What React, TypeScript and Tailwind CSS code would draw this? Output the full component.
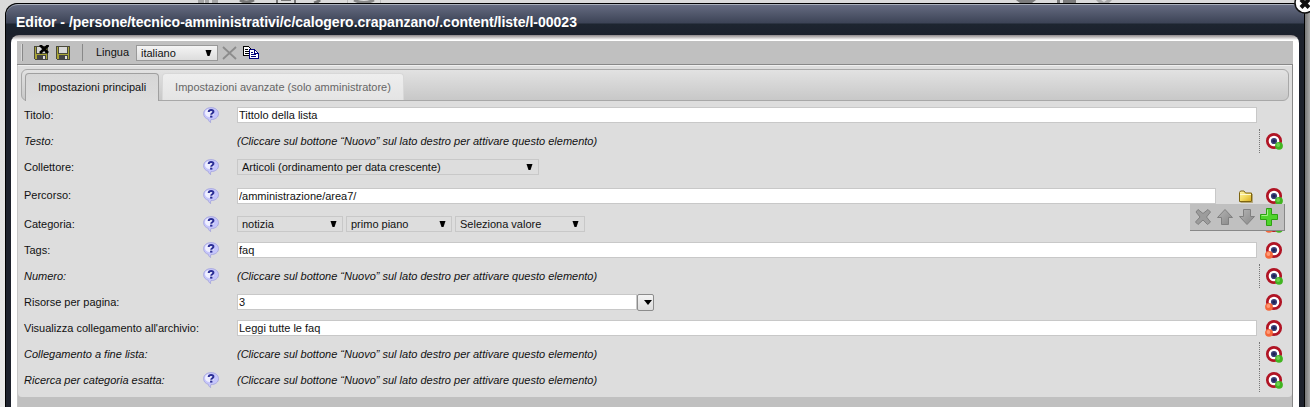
import React, { useState } from 'react';

type Marker = 'green' | 'red' | 'both';

function HelpIcon() {
  return (
    <svg width="16" height="16" viewBox="0 0 16 16">
      <path d="M8 .6C3.800.6.6 3.200.6 6.700c0 2.800 1.900 4.900 4.700 5.600.1 1.300.8 2.300 2.300 3.300-.3-1.200-.1-2.200.3-3C12.400 12.600 15.500 10.100 15.500 6.700 15.500 3.200 12.300.6 8 .6z" fill="#c6c6fb" stroke="#a3a3dc" strokeWidth="0.800" />
      <ellipse cx="6.500" cy="6" rx="4.500" ry="4" fill="#efefff" />
      <path d="M5.700 5c0-1.400 1.100-2 2.400-2s2.300.7 2.300 1.800c0 1.500-2.200 1.400-2.200 3" fill="none" stroke="#2b2f96" strokeWidth="2" />
      <rect x="7.100" y="8.600" width="2.300" height="2" fill="#2b2f96" />
    </svg>
  );
}

function TargetIcon({ marker }: { marker: Marker }) {
  return (
    <svg width="18" height="18" viewBox="0 0 18 18">
      <circle cx="9" cy="9" r="6.700" fill="#fff" stroke="#b01424" strokeWidth="2.700" />
      <circle cx="9" cy="9" r="3.100" fill="#3a4078" />
      <circle cx="9" cy="9" r="1.600" fill="#1c2054" />
      {marker !== 'red' && (
        <>
          <circle cx="14" cy="13.800" r="3.900" fill="#41b521" />
          <circle cx="13.200" cy="13" r="1.900" fill="#6fd04e" />
        </>
      )}
      {marker !== 'green' && (
        <>
          <circle cx="4" cy="13.800" r="3.900" fill="#f4673a" />
          <circle cx="3.400" cy="13" r="1.900" fill="#ff9a76" />
        </>
      )}
    </svg>
  );
}

function FolderIcon() {
  return (
    <svg width="16" height="16" viewBox="0 0 16 16">
      <defs>
        <linearGradient id="folder" x1="0" y1="0" x2="1" y2="1">
          <stop offset="0" stopColor="#fff6b0" />
          <stop offset="0.5" stopColor="#f3dc62" />
          <stop offset="1" stopColor="#d9ac1c" />
        </linearGradient>
      </defs>
      <path d="M1.500 13.500v-9l1-1.500h3.500l1.500 2h6v8.500z" fill="url(#folder)" stroke="#7d6410" />
      <path d="M2 6.500h11" stroke="#fffad0" />
      <path d="M14.500 6v8.500H2.500" stroke="#8e7416" strokeOpacity="0.500" fill="none" />
    </svg>
  );
}

function FloppyIcon({ exit = false }: { exit?: boolean }) {
  return (
    <svg width="16" height="16" viewBox="0 0 16 16" shapeRendering="crispEdges">
      <path d="M1 1h14v14H2l-1-1z" fill="#4a4a3c" />
      <path d="M2 2h12v12H2z" fill="#a8a436" />
      <path d="M3 1h10v8H3z" fill="#4a4a3c" />
      <path d="M4 2h8v6H4z" fill="#d8d8d8" />
      <path d="M4 10h9v5H4z" fill="#444" />
      <path d="M10 11h2v3h-2z" fill="#dedede" />
      {exit && <path d="M7 0l8 8M15.500 0L7 8" stroke="#000" strokeWidth="2.800" shapeRendering="auto" />}
    </svg>
  );
}

function CopyIcon() {
  return (
    <svg width="16" height="16" viewBox="0 0 16 16" shapeRendering="crispEdges">
      <path d="M.5 1.500h5l3 3v6h-8z" fill="#fff" stroke="#000" />
      <path d="M2 4.500h3M2 6.500h5M2 8.500h5" stroke="#000" />
      <path d="M6.500 4.500h5l3.500 3.500v5.500H6.500z" fill="#fff" stroke="#00007a" />
      <path d="M11.500 4.500v3.500h3.500" fill="none" stroke="#00007a" />
      <path d="M8 7.500h2M8 9.500h5M8 11.500h5" stroke="#00007a" />
    </svg>
  );
}

function ArrowIcon({ down = false }: { down?: boolean }) {
  return (
    <svg width="18" height="18" viewBox="0 0 18 18">
      <defs>
        <linearGradient id="arrow" x1="0" y1="0" x2="1" y2="1">
          <stop offset="0" stopColor="#b4b4b4" />
          <stop offset="1" stopColor="#878787" />
        </linearGradient>
      </defs>
      <path
        d={down ? 'M9 16.500L1.500 8.500H5.500V1.500H12.500V8.500H16.500z' : 'M9 1.500L16.500 9.500H12.500V16.500H5.500V9.500H1.500z'}
        fill="url(#arrow)"
        stroke="#808080"
      />
    </svg>
  );
}

function Caret() {
  return (
    <svg width="7" height="7" viewBox="0 0 7 7" className="pointer-events-none absolute top-[5px] right-1.5">
      <path d="M.5 0h6L4.500 6h-2z" fill="#000" />
    </svg>
  );
}

interface SelectBoxProps {
  id: string;
  label?: string;
  value: string;
  width: string;
}

function SelectBox({ id, label, value, width }: SelectBoxProps) {
  return (
    <span className={`relative block h-4 ${width}`}>
      <select id={id} aria-label={label} className="block h-4 w-full appearance-none border border-[#c8c8c8] bg-[#dddddd] pl-1 leading-[14px]">
        <option>{value}</option>
      </select>
      <Caret />
    </span>
  );
}

interface TextBoxProps {
  id: string;
  initial: string;
}

function TextBox({ id, initial }: TextBoxProps) {
  const [value, setValue] = useState(initial);
  return (
    <input
      id={id}
      type="text"
      value={value}
      onChange={(e) => setValue(e.target.value)}
      className="block h-4 w-full min-w-0 border border-[#c8c8c8] bg-white px-px leading-[14px]"
    />
  );
}

interface FieldProps {
  label: string;
  id?: string;
  help?: boolean;
  marker?: Marker;
  tall?: boolean;
  extra?: React.ReactNode;
  children?: React.ReactNode;
}

// A row without children is an element that has not been activated yet
function Field({ label, id, help, marker, tall, extra, children }: FieldProps) {
  return (
    <div className={`flex items-center ${tall ? 'h-[31px]' : 'h-[26px]'}`}>
      <div className="w-[179px] shrink-0">
        {children ? <label htmlFor={id}>{label}</label> : <em>{label}</em>}
      </div>
      <div className="w-[34px] shrink-0">
        {help && (
          <button type="button" aria-label={`Aiuto ${label}`} className="block">
            <HelpIcon />
          </button>
        )}
      </div>
      <div className="flex min-w-0 grow items-center">
        {children || <em>(Cliccare sul bottone “Nuovo” sul lato destro per attivare questo elemento)</em>}
      </div>
      {extra}
      <div className={`ml-0.5 flex h-6 w-[31px] shrink-0 items-center border-l border-dotted pl-[5px] ${children ? 'border-transparent' : 'border-[#777777]'}`}>
        {marker && (
          <button type="button" aria-label={`Modifica ${label}`} className="block">
            <TargetIcon marker={marker} />
          </button>
        )}
      </div>
    </div>
  );
}

function ElementMenu() {
  return (
    <div className="absolute top-4 -right-7 z-10 flex h-[27px] w-[95px] items-center justify-between border-r border-b border-[#888888] bg-[#c0c0c0] pr-1.5 pl-1">
      <button type="button" aria-label="Elimina">
        <svg width="18" height="18" viewBox="0 0 18 18">
          <path d="M4 1.500L9 5.500l5-4 2.500 2.500-4 5 4 5-3 2.500-4.500-4.500-5 4.500L1.500 14l4.500-5-4-5z" fill="#9c9c9c" stroke="#808080" />
        </svg>
      </button>
      <button type="button" aria-label="Sposta su">
        <ArrowIcon />
      </button>
      <button type="button" aria-label="Sposta giù">
        <ArrowIcon down />
      </button>
      <button type="button" aria-label="Nuovo">
        <svg width="18" height="18" viewBox="0 0 18 18">
          <path d="M6.500.5h5v6h6v5h-6v6h-5v-6h-6v-5h6z" fill="#4fd42c" stroke="#2da012" />
          <path d="M7.500 1.500v6h-6" fill="none" stroke="#a4f088" />
        </svg>
      </button>
    </div>
  );
}

function Toolbar() {
  return (
    <div className="flex h-6 items-center border-b border-[#888888] bg-[#c0c0c0]">
      <div className="ml-1 h-[17px] w-0.5 border-r border-[#888888] bg-[#d8d8d8]" />
      <button type="button" aria-label="Salva ed esci" className="ml-2.5">
        <FloppyIcon exit />
      </button>
      <button type="button" aria-label="Salva" className="ml-1.5">
        <FloppyIcon />
      </button>
      <div className="ml-2.5 h-[17px] w-0.5 border-r border-[#888888]" />
      <label htmlFor="lingua" className="ml-[13px] w-10">Lingua</label>
      <span className="relative block h-4 w-[82px]">
        <select id="lingua" className="block h-4 w-full appearance-none border border-[#999999] bg-linear-to-b from-[#f4f4f4] to-[#dddddd] pl-1 leading-[14px]">
          <option>italiano</option>
        </select>
        <Caret />
      </span>
      <button type="button" aria-label="Elimina lingua" className="ml-1">
        <svg width="16" height="16" viewBox="0 0 16 16">
          <path d="M1 2l13 12M14 2L1 14" stroke="#8c8c8c" strokeWidth="1.800" />
        </svg>
      </button>
      <button type="button" aria-label="Copia lingua" className="ml-[5px]">
        <CopyIcon />
      </button>
    </div>
  );
}

function Tabs() {
  return (
    <div className="mx-[3px] flex h-8 items-end rounded-md border border-[#a8a8a8] bg-linear-to-b from-[#e2e2e2] to-[#c8c8c8] px-[3px]">
      <button type="button" className="-mb-px h-7 w-[134px] rounded-t border border-b-0 border-[#a0a0a0] bg-linear-to-b from-[#d6d6d6] to-[#dddddd]">
        Impostazioni principali
      </button>
      <button type="button" className="ml-[3px] h-[27px] w-[242px] rounded-t border border-b-0 border-[#d8d8d8] bg-linear-to-b from-[#eeeeee] to-[#e4e4e4] text-[#666666]">
        Impostazioni avanzate (solo amministratore)
      </button>
    </div>
  );
}

export default function App() {
  return (
    <div className="relative min-h-screen overflow-hidden bg-linear-to-b from-[#dadada] to-[#eaeaea] pt-[3px] pr-[5px] pl-[5px] font-['Liberation_Sans',Arial,sans-serif] text-[11px] leading-[13px] text-[#111111]">
      {/* Page behind the dialog */}
      <svg width="930" height="3" viewBox="0 0 930 3" className="absolute top-0 left-[190px]">
        <path d="M8 0h6v3H8zM15 0h4v3h-4zM22 0h6v3h-6z" fill="#a4a4a4" />
        <path d="M50 0q6 4 14 0M130 0q-2 2-6 3" fill="none" stroke="#777" strokeWidth="3" />
        <path d="M87 0v3M105 0v3" stroke="#777" strokeWidth="2" />
        <path d="M91 0h10v1H91z" fill="#777" />
        <path d="M157.500 0v3M190.500 0v3" stroke="#bbb" />
        <path d="M164 0q10 5 20 0" fill="none" stroke="#888" strokeWidth="3" />
        <path d="M826 0h20l-4 3h-12zM867 0h3v3h-3zM873 0h13v3h-13z" fill="#7c7c7c" />
        <path d="M906 0h5l3 2 3-2h5l-3 3h-10z" fill="#a8a8a8" />
      </svg>
      <div className="absolute top-3 right-0 bottom-0 w-[5px] bg-linear-to-r from-[#777777] to-[#a8a8a8]" />

      <main className="relative flex min-h-[calc(100vh-3px)] flex-col rounded-t-xl border border-b-0 border-black bg-[#1d212c]">
        <header className="flex h-[31px] items-center rounded-t-xl border-t border-[#aab0bb] bg-[linear-gradient(#656b80,#3c4356_18px,#1d2530_19px,#1b202c)] pl-2.5">
          <h1 className="pt-1 text-sm leading-4 font-bold text-white">
            Editor - /persone/tecnico-amministrativi/c/calogero.crapanzano/.content/liste/l-00023
          </h1>
        </header>

        <div className="mx-[5px] flex grow flex-col rounded-t-lg bg-[linear-gradient(#8c8688,#ffffff_5px)] px-1.5 pt-1.5">
          <Toolbar />
          <div className="grow border-x border-[#888888] border-l-[#c8c8c8] bg-[#c0c0c0]">
            <form className="rounded-b border-t border-[#f0f0f0] bg-[#dddddd] pt-[3px] pb-1">
              <Tabs />
              <div className="pt-px pr-0.5 pl-1.5">
                <Field label="Titolo:" id="titolo" help>
                  <TextBox id="titolo" initial="Tittolo della lista" />
                </Field>
                <Field label="Testo:" marker="green" />
                <Field label="Collettore:" id="collettore" help>
                  <SelectBox id="collettore" value="Articoli (ordinamento per data crescente)" width="w-[302px]" />
                </Field>
                <Field
                  label="Percorso:"
                  id="percorso"
                  help
                  marker="green"
                  tall
                  extra={
                    <div className="relative flex w-[41px] shrink-0 items-center justify-end pr-[3px]">
                      <button type="button" aria-label="Sfoglia">
                        <FolderIcon />
                      </button>
                      <ElementMenu />
                    </div>
                  }
                >
                  <TextBox id="percorso" initial="/amministrazione/area7/" />
                </Field>
                <Field label="Categoria:" id="categoria" help marker="both">
                  <div className="flex gap-[3px]">
                    <SelectBox id="categoria" value="notizia" width="w-[106px]" />
                    <SelectBox id="categoria2" label="Categoria, secondo livello" value="primo piano" width="w-[106px]" />
                    <SelectBox id="categoria3" label="Categoria, terzo livello" value="Seleziona valore" width="w-[130px]" />
                  </div>
                </Field>
                <Field label="Tags:" id="tags" help marker="red">
                  <TextBox id="tags" initial="faq" />
                </Field>
                <Field label="Numero:" help marker="green" />
                <Field label="Risorse per pagina:" id="risorse" marker="red">
                  <div className="flex w-[417px]">
                    <TextBox id="risorse" initial="3" />
                    <button type="button" aria-label="Apri elenco" className="flex h-[17px] w-[17px] shrink-0 items-center justify-end rounded-xs border border-[#8c8c8c] bg-linear-to-b from-[#f4f4f4] to-[#dcdcdc] pr-px">
                      <svg width="8" height="5" viewBox="0 0 8 5">
                        <path d="M0 0h8L4 5z" fill="#000" />
                      </svg>
                    </button>
                  </div>
                </Field>
                <Field label="Visualizza collegamento all'archivio:" id="archivio" marker="red">
                  <TextBox id="archivio" initial="Leggi tutte le faq" />
                </Field>
                <Field label="Collegamento a fine lista:" marker="green" />
                <Field label="Ricerca per categoria esatta:" help marker="green" />
              </div>
            </form>
          </div>
        </div>
      </main>

      <button type="button" aria-label="Chiudi" className="absolute -top-2 -right-1.5 z-20 rounded-full">
        <svg width="22" height="22" viewBox="0 0 22 22">
          <circle cx="11" cy="11" r="10" fill="#fff" stroke="#111" strokeWidth="1.500" />
          <path d="M7 7.500l8 8M15 7.500l-8 8" stroke="#111" strokeWidth="4" />
        </svg>
      </button>
    </div>
  );
}
